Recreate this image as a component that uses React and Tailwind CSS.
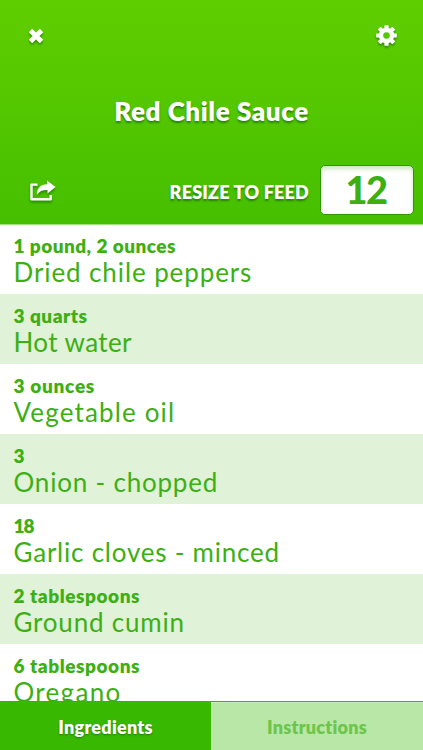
import React, { useState } from 'react';

const ingredients = [
  { amount: '1 pound, 2 ounces', name: 'Dried chile peppers', amountClass: 'tracking-[0.45px]', nameClass: 'tracking-[0.9px]' },
  { amount: '3 quarts', name: 'Hot water', amountClass: 'tracking-[0.5px]', nameClass: 'tracking-[0.4px]' },
  { amount: '3 ounces', name: 'Vegetable oil', amountClass: 'tracking-[0.7px]', nameClass: 'tracking-[1.15px]' },
  { amount: '3', name: 'Onion - chopped', amountClass: 'tracking-[0px]', nameClass: 'tracking-[0.8px]' },
  { amount: '18', name: 'Garlic cloves - minced', amountClass: 'tracking-[-1px]', nameClass: 'tracking-[0.77px]' },
  { amount: '2 tablespoons', name: 'Ground cumin', amountClass: 'tracking-[0.55px]', nameClass: 'tracking-[0.8px]' },
  { amount: '6 tablespoons', name: 'Oregano', amountClass: 'tracking-[0.55px]', nameClass: 'tracking-[1.3px]' }
];

const CloseIcon = () => (
  <svg width="16" height="16" viewBox="0 0 16 16" className="drop-shadow-[0_2px_1px_rgba(0,70,0,0.45)]">
    <path d="M2.5 2.5L13.5 13.5M13.5 2.5L2.5 13.5" stroke="#fff" strokeWidth="4.8" />
  </svg>
);

const GearIcon = () => (
  <svg width="21" height="21" viewBox="-10.5 -10.5 21 21" className="drop-shadow-[0_2px_1px_rgba(0,70,0,0.45)]">
    {[0, 45, 90, 135].map((angle) => (
      <rect key={angle} x="-2.1" y="-10.3" width="4.2" height="20.6" rx="0.5" fill="#fff" transform={`rotate(${angle})`} />
    ))}
    <circle r="7.8" fill="#fff" />
    <circle r="3.3" fill="#55c800" />
  </svg>
);

const ShareIcon = () => (
  <svg width="26" height="21" viewBox="0 0 26 21" className="drop-shadow-[0_2px_1px_rgba(0,70,0,0.45)]">
    <path d="M7.5 4.6H1.5V19.2H20.7V15" fill="none" stroke="#fff" strokeWidth="2.4" strokeLinejoin="round" />
    <path d="M17 0.5L25.5 7L17.5 13.5V10C13 9.8 9.5 11 6.8 15C6.8 9 10 4.2 17 4.2Z" fill="#fff" />
  </svg>
);

const IngredientRow = ({ item, shaded }) => (
  <li className={`h-[70px] shrink-0 pl-[13.5px] pt-[11px] whitespace-nowrap text-[#3cb013] ${shaded ? 'bg-[#e0f2d8]' : 'bg-white'}`}>
    <p className={`text-[19px] leading-[22px] font-extrabold ${item.amountClass}`}>{item.amount}</p>
    <p className={`text-[26px] leading-[30px] font-normal ${item.nameClass}`}>{item.name}</p>
  </li>
);

const App = () => {
  const [servings] = useState(12);

  return (
    <div className="flex h-[750px] w-[423px] flex-col overflow-hidden bg-white font-['Lato',sans-serif]">
      <header className="relative z-10 flex h-[225px] shrink-0 flex-col border-b border-[#9fe37a] bg-linear-to-b from-[#5fce00] to-[#45bf00] text-white">
        <div className="flex h-[71px] items-center justify-between pl-[28px] pr-[26px]">
          <button aria-label="Close"><CloseIcon /></button>
          <button aria-label="Settings"><GearIcon /></button>
        </div>
        <h1 className="mt-[25px] text-center text-[26px] leading-[30px] font-extrabold tracking-[0.6px] [text-shadow:0_2px_2px_rgba(0,70,0,0.5)]">
          Red Chile Sauce
        </h1>
        <div className="mt-[39px] flex h-[50px] items-center pl-[30px] pr-[9px]">
          <button aria-label="Share"><ShareIcon /></button>
          <span className="ml-auto mr-[11px] mt-[3px] text-[18px] leading-[22px] font-extrabold tracking-[0.2px] [text-shadow:0_2px_2px_rgba(0,70,0,0.5)]">
            RESIZE TO FEED
          </span>
          <div className="flex h-[50px] w-[94px] items-center justify-center rounded-[5px] border border-[#329600] bg-white pr-[2px] pb-[2px] text-[38px] leading-[40px] font-black tracking-[-1.5px] text-[#3cb013] shadow-[inset_0_3px_4px_rgba(80,180,40,0.3)]">
            {servings}
          </div>
        </div>
      </header>

      <ul className="-mt-px flex min-h-0 flex-1 flex-col overflow-hidden">
        {ingredients.map((item, i) => (
          <IngredientRow key={item.name} item={item} shaded={i % 2 === 1} />
        ))}
      </ul>

      <nav className="flex h-[49px] shrink-0 border-t border-[#45a824] text-[18px] font-extrabold tracking-[0.25px]">
        <button className="w-[211px] bg-[#39b800] pt-[2px] text-white [text-shadow:0_1px_2px_rgba(0,70,0,0.5)]">Ingredients</button>
        <button className="flex-1 bg-[#b9e7a8] pt-[2px] text-[#6dc54b] shadow-[inset_0_1px_0_#c8edb9]">Instructions</button>
      </nav>
    </div>
  );
};

export default App;
